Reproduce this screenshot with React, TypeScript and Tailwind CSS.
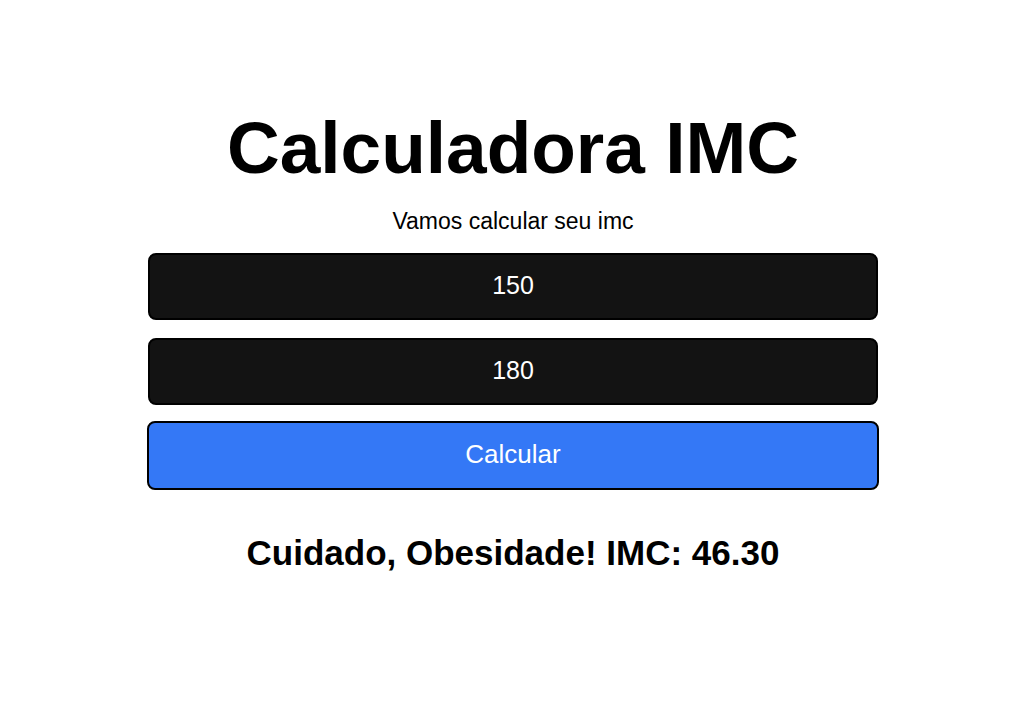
import React from "react";

export default function App() {
    return (
        <div className="min-h-screen bg-white text-black font-['Liberation_Sans',Arial,sans-serif] pl-[6px]">
            <div className="w-[732px] mx-auto flex flex-col items-center pt-[110px]">
                <h1 className="text-[73px] font-bold leading-[76px]">Calculadora IMC</h1>
                <p className="text-[23px] leading-[26px] mt-[22px]">Vamos calcular seu imc</p>

                <div className="w-[730px] flex flex-col gap-[18px] mt-[19px]">
                    <input
                        type="text"
                        defaultValue="150"
                        className="w-full h-[67px] bg-[#131313] border-2 border-black rounded-lg text-white text-center text-[25px] leading-[30px] pb-[2px] outline-none"
                    />
                    <input
                        type="text"
                        defaultValue="180"
                        className="w-full h-[67px] bg-[#131313] border-2 border-black rounded-lg text-white text-center text-[25px] leading-[30px] pb-[2px] outline-none"
                    />
                </div>

                <button className="w-[732px] h-[69px] mt-[16px] bg-[#3478f6] border-2 border-black rounded-lg text-white text-[26px] pb-[2px]">
                    Calcular
                </button>

                <h2 className="text-[35px] font-bold leading-[40px] mt-[43px]">
                    Cuidado, Obesidade! IMC: 46.30
                </h2>
            </div>
        </div>
    );
}
